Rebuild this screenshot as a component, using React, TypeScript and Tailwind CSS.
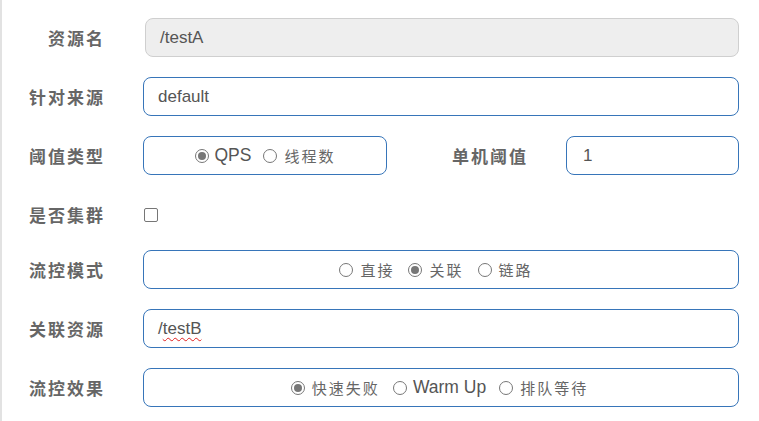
import React from "react";

const CJK = { fontFamily: '"Noto Sans CJK SC", "Noto Sans CJK JP", sans-serif' };
const LAT = { fontFamily: '"Liberation Sans", Arial, sans-serif' };

function Label({ children }: { children: React.ReactNode }) {
  return (
    <div
      className="w-[103px] shrink-0 text-right text-[17px] font-bold tracking-[2px] text-[#666]"
      style={CJK}
    >
      {children}
    </div>
  );
}

function Radio({ checked, children, cjk }: { checked?: boolean; children: React.ReactNode; cjk?: boolean }) {
  return (
    <div className="flex items-center">
      <span className="flex h-[14px] w-[14px] items-center justify-center rounded-full border border-[#777] bg-white">
        {checked && <span className="h-[8px] w-[8px] rounded-full bg-[#777]" />}
      </span>
      {cjk ? (
        <span className="ml-[7px] mt-[1px] text-[15px] tracking-[2px] text-[#666]" style={CJK}>
          {children}
        </span>
      ) : (
        <span className="ml-[6px] text-[17.5px] text-[#555]" style={LAT}>
          {children}
        </span>
      )}
    </div>
  );
}

const boxCls =
  "flex h-[39px] items-center rounded-[8px] border border-[#3775b9] bg-white";

export default function App() {
  return (
    <div className="min-h-[421px] w-[759px] border-l-2 border-[#e2e2e2] bg-white pt-[18px] pr-[20px]">
      {/* 资源名 */}
      <div className="flex h-[39px] items-center">
        <Label>资源名</Label>
        <div
          className="ml-[40px] flex h-[39px] flex-1 items-center rounded-[8px] border border-[#cfcfcf] bg-[#eeeeee] pl-[14px] text-[17px] text-[#555]"
          style={LAT}
        >
          /testA
        </div>
      </div>

      {/* 针对来源 */}
      <div className="mt-[20px] flex h-[39px] items-center">
        <Label>针对来源</Label>
        <div className={`ml-[38px] flex-1 pl-[14px] text-[17px] text-[#555] ${boxCls}`} style={LAT}>
          default
        </div>
      </div>

      {/* 阈值类型 */}
      <div className="mt-[20px] flex h-[39px] items-center">
        <Label>阈值类型</Label>
        <div className={`ml-[38px] w-[244px] justify-center gap-[12px] ${boxCls}`}>
          <Radio checked>QPS</Radio>
          <Radio cjk>线程数</Radio>
        </div>
        <div className="ml-[65px] w-[114px] text-[17px] font-bold tracking-[2px] text-[#666]" style={CJK}>
          单机阈值
        </div>
        <div className={`flex-1 pl-[16px] text-[17px] text-[#555] ${boxCls}`} style={LAT}>
          1
        </div>
      </div>

      {/* 是否集群 */}
      <div className="mt-[20px] flex h-[40px] items-center">
        <Label>是否集群</Label>
        <span className="ml-[39px] h-[14px] w-[14px] rounded-[2px] border border-[#767676] bg-white" />
      </div>

      {/* 流控模式 */}
      <div className="mt-[15px] flex h-[39px] items-center">
        <Label>流控模式</Label>
        <div className={`ml-[38px] flex-1 justify-center gap-[14px] pr-[10px] ${boxCls}`}>
          <Radio cjk>直接</Radio>
          <Radio checked cjk>关联</Radio>
          <Radio cjk>链路</Radio>
        </div>
      </div>

      {/* 关联资源 */}
      <div className="mt-[20px] flex h-[39px] items-center">
        <Label>关联资源</Label>
        <div className={`ml-[38px] flex-1 pl-[14px] text-[17px] text-[#555] ${boxCls}`} style={LAT}>
          /
          <span className="underline decoration-wavy decoration-[#e02020] decoration-1 underline-offset-[3px]">
            testB
          </span>
        </div>
      </div>

      {/* 流控效果 */}
      <div className="mt-[20px] flex h-[39px] items-center">
        <Label>流控效果</Label>
        <div className={`ml-[38px] flex-1 justify-center gap-[13px] pr-[3px] ${boxCls}`}>
          <Radio checked cjk>快速失败</Radio>
          <Radio>Warm Up</Radio>
          <Radio cjk>排队等待</Radio>
        </div>
      </div>
    </div>
  );
}
